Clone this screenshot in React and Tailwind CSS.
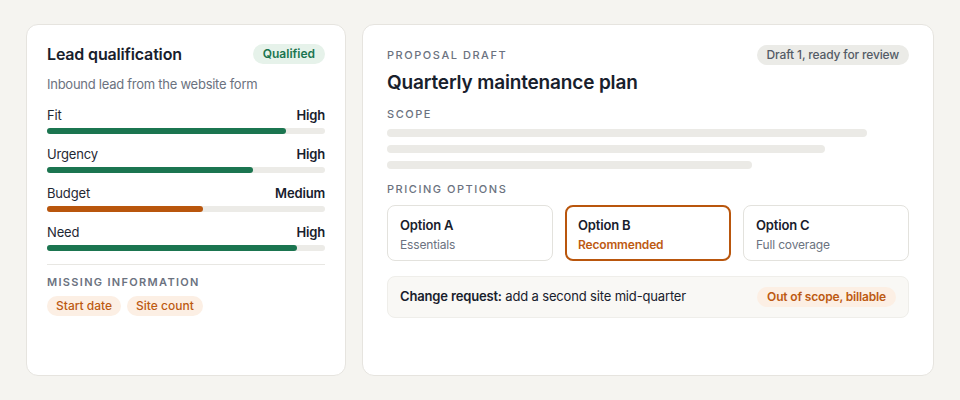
const scores = [
  { label: "Fit", value: "High", pct: 86, color: "bg-[#1b7550]" },
  { label: "Urgency", value: "High", pct: 74, color: "bg-[#1b7550]" },
  { label: "Budget", value: "Medium", pct: 56, color: "bg-[#b9560d]" },
  { label: "Need", value: "High", pct: 90, color: "bg-[#1b7550]" },
];

const options = [
  { name: "Option A", sub: "Essentials" },
  { name: "Option B", sub: "Recommended", active: true },
  { name: "Option C", sub: "Full coverage" },
];

const App = () => {
  return (
    <div className="w-[960px] h-[400px] bg-[#f5f4f0] px-[26px] py-6 flex gap-4 font-['Inter',sans-serif] tracking-[-0.01em] text-[#18202c]">
      {/* Lead card */}
      <div className="w-[320px] bg-white rounded-xl border border-[#e6e4df] px-5 pt-[19px]">
        <div className="flex items-center justify-between h-5">
          <h2 className="text-[16px] font-semibold leading-5">Lead qualification</h2>
          <span className="text-[12px] font-semibold text-[#1b7550] bg-[#e6f2ea] rounded-full px-[10px] leading-5 tracking-normal">Qualified</span>
        </div>
        <p className="mt-[11px] text-[13px] leading-[18px] text-[#6b7280] tracking-[-0.02em]">Inbound lead from the website form</p>
        <div className="mt-[13px] flex flex-col gap-[11px]">
          {scores.map((s) => (
            <div key={s.label}>
              <div className="flex justify-between text-[13px] leading-[18px]">
                <span className="text-[#1f2733]">{s.label}</span>
                <span className="font-semibold">{s.value}</span>
              </div>
              <div className="mt-1 h-[6px] rounded-full bg-[#ecebe7]">
                <div className={`h-full rounded-full ${s.color}`} style={{ width: `${s.pct}%` }} />
              </div>
            </div>
          ))}
        </div>
        <div className="mt-[13px] border-t border-[#e8e7e3]" />
        <div className="mt-[9px] text-[11px] leading-4 font-semibold tracking-[0.12em] text-[#6b7280]">MISSING INFORMATION</div>
        <div className="mt-[6px] flex gap-[6px]">
          {["Start date", "Site count"].map((c) => (
            <span key={c} className="text-[12px] font-medium leading-5 px-[9px] tracking-normal rounded-full bg-[#fcefe4] text-[#bd5a12]">{c}</span>
          ))}
        </div>
      </div>

      {/* Proposal card */}
      <div className="flex-1 bg-white rounded-xl border border-[#e6e4df] px-6 pt-5">
        <div className="flex items-center justify-between h-5">
          <span className="text-[11px] font-medium tracking-[0.14em] text-[#6b7280]">PROPOSAL DRAFT</span>
          <span className="text-[12px] font-medium text-[#545b66] bg-[#ebebe7] rounded-full px-[10px] leading-5">Draft 1, ready for review</span>
        </div>
        <h1 className="mt-[5px] text-[19px] leading-[26px] font-semibold">Quarterly maintenance plan</h1>
        <div className="mt-[10px] text-[11px] leading-4 font-medium tracking-[0.14em] text-[#6b7280]">SCOPE</div>
        <div className="mt-[7px] flex flex-col gap-2">
          <div className="h-2 w-[480px] rounded-full bg-[#ebeae6]" />
          <div className="h-2 w-[438px] rounded-full bg-[#ebeae6]" />
          <div className="h-2 w-[365px] rounded-full bg-[#ebeae6]" />
        </div>
        <div className="mt-[12px] text-[11px] leading-4 font-medium tracking-[0.14em] text-[#6b7280]">PRICING OPTIONS</div>
        <div className="mt-2 grid grid-cols-3 gap-3">
          {options.map((o) => (
            <div
              key={o.name}
              className={`h-14 rounded-lg px-3 pt-[2px] flex flex-col justify-center ${o.active ? "border-2 border-[#b9560d] px-[11px]" : "border border-[#e3e2dd]"}`}
            >
              <div className="text-[13px] leading-[18px] font-semibold">{o.name}</div>
              <div className={`text-[12px] leading-4 mt-[3px] ${o.active ? "text-[#bd5a12] font-semibold" : "text-[#6b7280]"}`}>{o.sub}</div>
            </div>
          ))}
        </div>
        <div className="mt-[15px] h-[42px] rounded-lg bg-[#f9f8f5] border border-[#efeeea] px-3 flex items-center justify-between">
          <span className="text-[13px]">
            <span className="font-semibold">Change request:</span> add a second site mid-quarter
          </span>
          <span className="text-[12px] font-semibold leading-5 px-[10px] rounded-full bg-[#fcefe4] text-[#bd5a12]">Out of scope, billable</span>
        </div>
      </div>
    </div>
  );
};

export default App;
